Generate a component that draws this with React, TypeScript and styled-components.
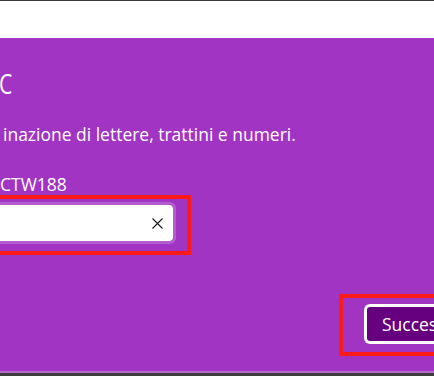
import React from "react";
import styled, { createGlobalStyle } from "styled-components";

const Global = createGlobalStyle`
  html, body {
    margin: 0;
    padding: 0;
    width: 434px;
    height: 376px;
    overflow: hidden;
    background: #a234c3;
  }
  #root {
    width: 434px;
    height: 376px;
  }
`;

const Frame = styled.div`
  display: flex;
  flex-direction: column;
  width: 434px;
  height: 376px;
  overflow: hidden;
  font-family: "Open Sans", "Noto Sans", sans-serif;
  color: #ffffff;
`;

const TopBar = styled.div`
  flex: 0 0 37px;
  background: #ffffff;
  border-top: 1px solid #3a3a3a;
`;

const Dialog = styled.div`
  flex: 1 1 auto;
  display: flex;
  flex-direction: column;
  background: #a234c3;
  padding-top: 27px;
`;

const Squeeze = styled.span<{ $k?: number }>`
  display: inline-block;
  white-space: nowrap;
  transform: scaleX(${(p) => p.$k ?? 0.92});
  transform-origin: left center;
`;

const Title = styled.div`
  font-size: 28px;
  line-height: 36px;
  font-weight: 400;
  margin-left: -1px;
`;

const Description = styled.div`
  font-size: 19px;
  line-height: 22px;
  margin-top: 22px;
  padding-left: 3px;
`;

const CurrentName = styled.div`
  font-size: 19px;
  line-height: 21px;
  margin-top: 29px;
`;

const Highlight = styled.div`
  border: 4px solid #ff1a1a;
  box-sizing: border-box;
`;

const FieldHighlight = styled(Highlight)`
  width: 215px;
  margin-left: -24px;
  padding: 3px 11px 7px 0;
`;

const TextBox = styled.div`
  height: 42px;
  box-sizing: border-box;
  border: 3px solid rgba(255, 255, 255, 0.2);
  border-left: none;
  border-radius: 0 6px 6px 0;
  display: flex;
  align-items: center;
  justify-content: flex-end;
`;

const TextBoxInner = styled.div`
  flex: 1 1 auto;
  height: 36px;
  background: #ffffff;
  border-radius: 0 4px 4px 0;
  display: flex;
  align-items: center;
  justify-content: flex-end;
  padding-right: 8px;
`;

const ClearButton = styled.span`
  display: flex;
  align-items: center;
  justify-content: center;
  width: 16px;
  height: 16px;
  color: #1a1a1a;
`;

const Footer = styled.div`
  display: flex;
  justify-content: flex-end;
  margin-top: 39px;
  margin-right: -60px;
`;

const ButtonHighlight = styled(Highlight)`
  width: 155px;
  padding: 6px 0 8px 21px;
`;

const PrimaryButton = styled.div`
  height: 40px;
  box-sizing: border-box;
  border: 3px solid #ffffff;
  border-right: none;
  border-radius: 6px 0 0 6px;
  background: #66007f;
  color: #ffffff;
  font-size: 19px;
  line-height: 34px;
  padding-left: 15px;
  overflow: hidden;
`;

const BottomEdge = styled.div`
  flex: 0 0 3px;
  background: #3c3c3c;
  border-top: 2px solid #b66ccd;
`;

export default function App() {
  return (
    <>
      <Global />
      <Frame>
        <TopBar />
        <Dialog>
          <Title>
            <Squeeze $k={0.75}>C</Squeeze>
          </Title>
          <Description>
            <Squeeze>inazione di lettere, trattini e numeri.</Squeeze>
          </Description>
          <CurrentName>
            <Squeeze>CTW188</Squeeze>
          </CurrentName>
          <FieldHighlight>
            <TextBox>
              <TextBoxInner>
                <ClearButton>
                  <svg width="11" height="11" viewBox="0 0 11 11" fill="none">
                    <path d="M0.5 0.5L10.5 10.5M10.5 0.5L0.5 10.5" stroke="currentColor" strokeWidth="1.1" />
                  </svg>
                </ClearButton>
              </TextBoxInner>
            </TextBox>
          </FieldHighlight>
          <Footer>
            <ButtonHighlight>
              <PrimaryButton>
                <Squeeze>Successivo</Squeeze>
              </PrimaryButton>
            </ButtonHighlight>
          </Footer>
        </Dialog>
        <BottomEdge />
      </Frame>
    </>
  );
}
